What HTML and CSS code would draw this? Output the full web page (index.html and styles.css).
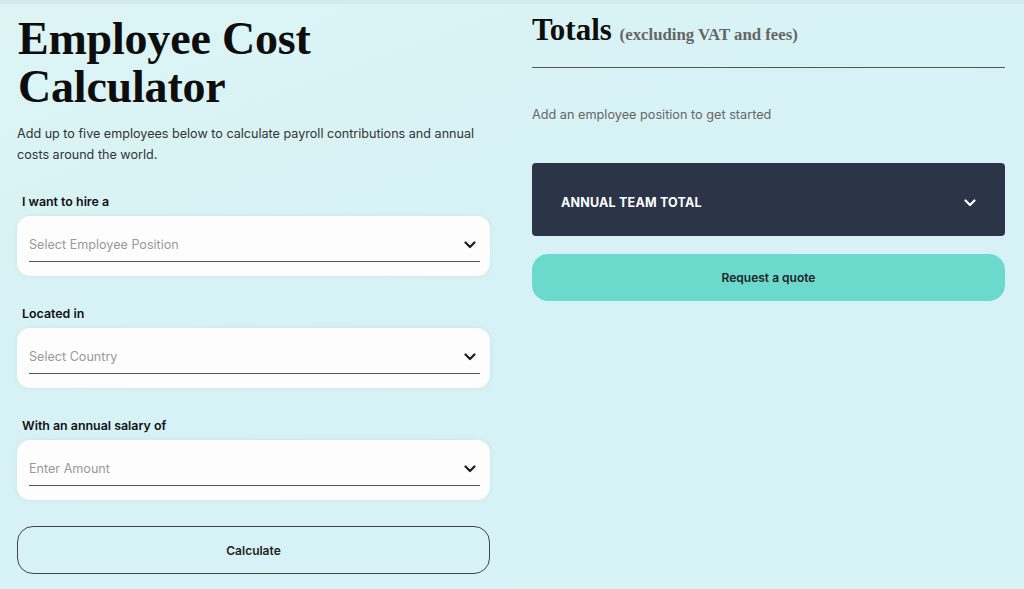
FILE: index.html
```html
<!DOCTYPE html>
<html lang="en">
<head>
<meta charset="utf-8">
<title>Employee Cost Calculator</title>
<link rel="stylesheet" href="styles.css">
</head>
<body>
<div class="topstrip"></div>
<main class="page">
  <section class="left">
    <h1 class="title">Employee Cost<br>Calculator</h1>
    <p class="intro">Add up to five employees below to calculate payroll contributions and annual costs around the world.</p>

    <div class="field">
      <label class="label">I want to hire a</label>
      <div class="select">
        <div class="select-line">
          <span class="placeholder">Select Employee Position</span>
          <svg class="chev" width="12" height="8" viewBox="0 0 12 8"><path d="M1.5 1.5 L6 6 L10.5 1.5" fill="none" stroke="#1e1e1e" stroke-width="2.2" stroke-linecap="round" stroke-linejoin="round"/></svg>
        </div>
      </div>
    </div>

    <div class="field">
      <label class="label">Located in</label>
      <div class="select">
        <div class="select-line">
          <span class="placeholder">Select Country</span>
          <svg class="chev" width="12" height="8" viewBox="0 0 12 8"><path d="M1.5 1.5 L6 6 L10.5 1.5" fill="none" stroke="#1e1e1e" stroke-width="2.2" stroke-linecap="round" stroke-linejoin="round"/></svg>
        </div>
      </div>
    </div>

    <div class="field">
      <label class="label">With an annual salary of</label>
      <div class="select">
        <div class="select-line">
          <span class="placeholder">Enter Amount</span>
          <svg class="chev" width="12" height="8" viewBox="0 0 12 8"><path d="M1.5 1.5 L6 6 L10.5 1.5" fill="none" stroke="#1e1e1e" stroke-width="2.2" stroke-linecap="round" stroke-linejoin="round"/></svg>
        </div>
      </div>
    </div>

    <button class="calc">Calculate</button>
  </section>

  <section class="right">
    <h2 class="totals">Totals <span class="sub">(excluding VAT and fees)</span></h2>
    <p class="hint">Add an employee position to get started</p>
    <div class="team">
      <span>ANNUAL TEAM TOTAL</span>
      <svg class="chev" width="12" height="8" viewBox="0 0 12 8"><path d="M1.5 1.5 L6 6 L10.5 1.5" fill="none" stroke="#ffffff" stroke-width="2.2" stroke-linecap="round" stroke-linejoin="round"/></svg>
    </div>
    <button class="quote">Request a quote</button>
  </section>
</main>
</body>
</html>
```

FILE: styles.css
```css
* { box-sizing: border-box; }
html, body { margin: 0; padding: 0; }
body {
  width: 1024px;
  height: 589px;
  overflow: hidden;
  background: linear-gradient(160deg, #dcf4f4 0%, #d6f2f6 50%, #d7f3f6 100%);
  font-family: Inter, "Noto Sans", sans-serif;
  color: #222;
}
.topstrip {
  height: 4px;
  background: #d3ebec;
}
.page {
  display: flex;
  gap: 42px;
  padding: 0 19px 0 17px;
}
.left { width: 473px; flex: none; }
.right { flex: 1; padding-top: 8px; }

.title {
  margin: 11px 0 0 1px;
  font-family: "Liberation Serif", "Times New Roman", serif;
  font-weight: 700;
  font-size: 46px;
  line-height: 48px;
  color: #0d0d0d;
  letter-spacing: -0.2px;
}
.intro {
  margin: 12px 0 0 0;
  font-size: 12.6px;
  line-height: 21px;
  color: #333;
  width: 472px;
}
.field { margin-top: 29px; }
.field + .field { margin-top: 30px; }
.label {
  display: block;
  margin-left: 5px;
  font-size: 12.4px;
  font-weight: 600;
  color: #111;
  line-height: 16px;
}
.select {
  margin-top: 6px;
  height: 60px;
  background: #fdfdfd;
  border-radius: 13px;
  box-shadow: 0 0 4px rgba(200, 225, 225, 0.8);
  padding: 12px 10px 0 12px;
}
.select-line {
  display: flex;
  align-items: center;
  justify-content: space-between;
  height: 34px;
  border-bottom: 1px solid #555;
  padding-right: 4px;
}
.placeholder {
  font-size: 12.6px;
  color: #999;
}
.calc {
  display: block;
  width: 473px;
  height: 48px;
  margin-top: 26px;
  background: transparent;
  border: 1px solid #444;
  border-radius: 16px;
  font-family: Inter, "Noto Sans", sans-serif;
  font-size: 12px;
  font-weight: 600;
  color: #222;
}

.totals {
  margin: 0;
  font-family: "Liberation Serif", "Times New Roman", serif;
  font-weight: 700;
  font-size: 31px;
  line-height: 36px;
  color: #0d0d0d;
  padding-bottom: 14px;
  border-bottom: 1px solid #555;
}
.totals .sub {
  font-size: 16.8px;
  color: #666;
}
.hint {
  margin: 38px 0 0 0;
  font-size: 12.7px;
  color: #666;
  line-height: 18px;
}
.team {
  margin-top: 39px;
  height: 73px;
  background: #2b3547;
  border-radius: 4px;
  display: flex;
  align-items: center;
  justify-content: space-between;
  padding: 6px 29px 0 29px;
  color: #fff;
  font-size: 12.5px;
  font-weight: 700;
  letter-spacing: 0.2px;
}
.quote {
  display: block;
  width: 100%;
  height: 47px;
  margin-top: 18px;
  background: #6bdacd;
  border: none;
  border-radius: 16px;
  font-family: Inter, "Noto Sans", sans-serif;
  font-size: 12px;
  font-weight: 600;
  color: #222;
}
```
